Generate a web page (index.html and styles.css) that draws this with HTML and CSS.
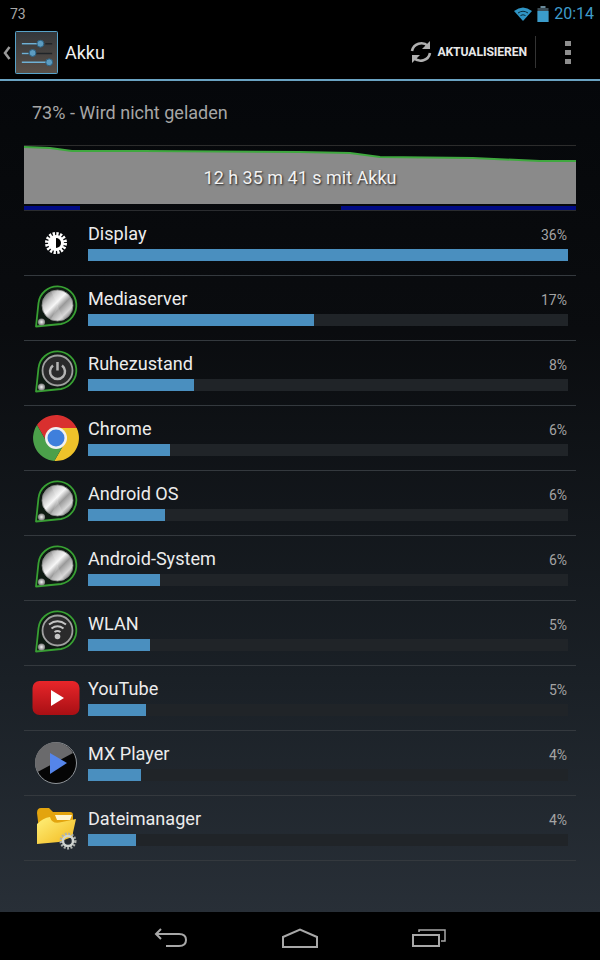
FILE: index.html
```html
<!DOCTYPE html>
<html lang="de">
<head>
<meta charset="utf-8">
<title>Akku</title>
<link rel="stylesheet" href="styles.css">
</head>
<body>
<svg class="defs" width="0" height="0" aria-hidden="true">
  <defs>
    <linearGradient id="metal" x1="0.1" y1="0.1" x2="0.9" y2="0.9">
      <stop offset="0" stop-color="#6f6f6f"/><stop offset=".22" stop-color="#c8c8c8"/><stop offset=".42" stop-color="#f6f6f6"/><stop offset=".6" stop-color="#9a9a9a"/><stop offset=".82" stop-color="#d8d8d8"/><stop offset="1" stop-color="#6a6a6a"/>
    </linearGradient>
    <linearGradient id="ytred" x1="0" y1="0" x2="0" y2="1">
      <stop offset="0" stop-color="#e8262a"/><stop offset="1" stop-color="#a80f14"/>
    </linearGradient>
    <linearGradient id="folder" x1="0" y1="0" x2="1" y2="1">
      <stop offset="0" stop-color="#fff07a"/><stop offset="1" stop-color="#f2b81c"/>
    </linearGradient>
    <linearGradient id="setbg" x1="0" y1="0" x2="0" y2="1">
      <stop offset="0" stop-color="#33373b"/><stop offset="1" stop-color="#5a5048"/>
    </linearGradient>
    <radialGradient id="ball"><stop offset="0" stop-color="#f4f4f4"/><stop offset="1" stop-color="#777"/></radialGradient>
    <symbol id="drop" viewBox="0 0 48 48">
      <path d="M4 42.500 L6.500 19 A19 19 0 1 1 29 40 Z" fill="#0e1a12" stroke="#38a033" stroke-width="1.800" stroke-linejoin="round"/>
      <circle cx="9.500" cy="38" r="3.600" fill="url(#ball)"/>
    </symbol>
    <symbol id="metaldisc" viewBox="0 0 48 48">
      <circle cx="25.500" cy="21.500" r="15.500" fill="url(#metal)" stroke="#8a8a8a" stroke-width=".8"/>
      <path d="M25.500 21.500 L19 7 L32 7 Z M25.500 21.500 L19 36 L32 36 Z" fill="#fff" opacity=".16"/>
    </symbol>
    <symbol id="darkdisc" viewBox="0 0 48 48">
      <circle cx="25.500" cy="21.500" r="15" fill="#2a2a2b" stroke="#a0a0a0" stroke-width="1.800"/>
    </symbol>
  </defs>
</svg>

<header class="status">
  <span class="status-left">73</span>
  <span class="status-right">
    <svg class="wifi" width="18" height="14" viewBox="0 0 18 14"><path d="M0 4 Q9 -3 18 4 L9 14 Z" fill="#2f94c4"/><path d="M4 6 Q9 2.500 14 6 M6.500 8.500 Q9 7 11.500 8.500" stroke="#0a2a3a" stroke-width="1" fill="none"/></svg>
    <svg class="batt" width="12" height="16" viewBox="0 0 12 16"><rect x="3.500" y="0" width="5" height="2" fill="#6a8a9a"/><rect x="0.500" y="2" width="11" height="14" fill="#3a4c56"/><rect x="0.500" y="5" width="11" height="11" fill="#3b9ccb"/></svg>
    <span class="clock">20:14</span>
  </span>
</header>

<nav class="actionbar">
  <svg class="chev" width="8" height="14" viewBox="0 0 8 14"><path d="M6.500 1 L2 7 L6.500 13" fill="none" stroke="#9a9a9a" stroke-width="2.500"/></svg>
  <svg class="appicon" width="43" height="43" viewBox="0 0 44 44">
    <rect x=".5" y=".5" width="43" height="43" rx="1" fill="url(#setbg)" stroke="#5aa7cf"/>
    <path d="M7 13H25M31 13H38M7 23H14M20 23H38" stroke="#202428" stroke-width="1.500"/>
    <path d="M7 13H25M7 23H14M7 32H34" stroke="#6fb0d4" stroke-width="1.500"/>
    <circle cx="26" cy="13" r="3.500" fill="#5d9cc0" stroke="#2b5f80"/>
    <circle cx="18" cy="22.500" r="3.500" fill="#5d9cc0" stroke="#2b5f80"/>
    <circle cx="35" cy="32" r="3.500" fill="#5d9cc0" stroke="#2b5f80"/>
  </svg>
  <span class="title">Akku</span>
  <span class="spacer"></span>
  <svg class="refresh" width="24" height="24" viewBox="0 0 24 24"><path d="M3 11 A9.500 9.500 0 0 1 19 6" fill="none" stroke="#b0b0b0" stroke-width="2.600"/><path d="M21 1 V9 H13 Z" fill="#b0b0b0"/><path d="M21 13 A9.500 9.500 0 0 1 5 18" fill="none" stroke="#b0b0b0" stroke-width="2.600"/><path d="M3 23 V15 H11 Z" fill="#b0b0b0"/></svg>
  <span class="action">AKTUALISIEREN</span>
  <span class="vsep"></span>
  <span class="overflow"><i></i><i></i><i></i></span>
</nav>

<main class="content">
  <p class="charge">73% - Wird nicht geladen</p>
  <section class="graph">
    <svg width="552" height="65" viewBox="0 0 552 65">
      <rect width="552" height="1" fill="#2c2c2c"/>
      <path d="M0 2 L26 3 L48 6 L120 6 L276 7 L326 8 L356 12 L449 13 L516 16 L552 16 V59 H0 Z" fill="#8a8a8a"/>
      <path d="M0 2 L26 3 L48 6 L120 6 L276 7 L326 8 L356 12 L449 13 L516 16 L552 16" fill="none" stroke="#3fa83f" stroke-width="2"/>
      <rect y="61" width="56" height="4" fill="#000a84"/>
      <rect x="317" y="61" width="235" height="4" fill="#000a84"/>
    </svg>
    <span class="graph-label">12 h 35 m 41 s mit Akku</span>
  </section>

  <ul class="list">
    <li class="row">
      <span class="icon"><svg width="48" height="48" viewBox="0 0 48 48"><circle cx="24" cy="24" r="9" fill="none" stroke="#fff" stroke-width="4" stroke-dasharray="2.200 1.340"/><circle cx="24" cy="24" r="8" fill="#fff"/><path d="M24 19 A5 5 0 0 1 24 29 Z" fill="#000"/></svg></span>
      <div class="info"><div class="line"><span class="name">Display</span><span class="pct">36%</span></div><div class="track"><div class="fill" style="width:480px"></div></div></div>
    </li>
    <li class="row">
      <span class="icon"><svg width="48" height="48"><use href="#drop"/><use href="#metaldisc"/></svg></span>
      <div class="info"><div class="line"><span class="name">Mediaserver</span><span class="pct">17%</span></div><div class="track"><div class="fill" style="width:226px"></div></div></div>
    </li>
    <li class="row">
      <span class="icon"><svg width="48" height="48" viewBox="0 0 48 48"><use href="#drop"/><use href="#darkdisc"/><path d="M21 16.500 A7.500 7.500 0 1 0 30 16.500" fill="none" stroke="#b4b4b4" stroke-width="2.500"/><path d="M25.500 13 V21.500" stroke="#b4b4b4" stroke-width="2.500"/></svg></span>
      <div class="info"><div class="line"><span class="name">Ruhezustand</span><span class="pct">8%</span></div><div class="track"><div class="fill" style="width:106px"></div></div></div>
    </li>
    <li class="row">
      <span class="icon"><svg width="48" height="48" viewBox="0 0 48 48">
        <path d="M5 11.070 A23 23 0 0 1 44.700 14 L24 14 L15.340 29 Z" fill="#d9302f"/>
        <path d="M44.700 14 A23 23 0 0 1 22.300 46.900 L32.660 29 L24 14 Z" fill="#eec22a"/>
        <path d="M22.300 46.900 A23 23 0 0 1 5 11.070 L15.340 29 L32.660 29 Z" fill="#4ba04a"/>
        <circle cx="24" cy="24" r="11" fill="#f0f0f0"/><circle cx="24" cy="24" r="8.500" fill="#3f7fdc"/>
      </svg></span>
      <div class="info"><div class="line"><span class="name">Chrome</span><span class="pct">6%</span></div><div class="track"><div class="fill" style="width:82px"></div></div></div>
    </li>
    <li class="row">
      <span class="icon"><svg width="48" height="48"><use href="#drop"/><use href="#metaldisc"/></svg></span>
      <div class="info"><div class="line"><span class="name">Android OS</span><span class="pct">6%</span></div><div class="track"><div class="fill" style="width:77px"></div></div></div>
    </li>
    <li class="row">
      <span class="icon"><svg width="48" height="48"><use href="#drop"/><use href="#metaldisc"/></svg></span>
      <div class="info"><div class="line"><span class="name">Android-System</span><span class="pct">6%</span></div><div class="track"><div class="fill" style="width:72px"></div></div></div>
    </li>
    <li class="row">
      <span class="icon"><svg width="48" height="48" viewBox="0 0 48 48"><use href="#drop"/><use href="#darkdisc"/><path d="M17 15.500 Q25.500 9 34 15.500 M19.500 19.500 Q25.500 15 31.500 19.500 M22.500 23 Q25.500 21 28.500 23" fill="none" stroke="#c4c4c4" stroke-width="2"/><circle cx="25.500" cy="27.500" r="2.800" fill="#c4c4c4"/></svg></span>
      <div class="info"><div class="line"><span class="name">WLAN</span><span class="pct">5%</span></div><div class="track"><div class="fill" style="width:62px"></div></div></div>
    </li>
    <li class="row">
      <span class="icon"><svg width="48" height="48" viewBox="0 0 48 48"><rect x="0.500" y="7" width="47" height="34" rx="7" fill="url(#ytred)"/><path d="M19 16 L32 24 L19 32 Z" fill="#fff"/></svg></span>
      <div class="info"><div class="line"><span class="name">YouTube</span><span class="pct">5%</span></div><div class="track"><div class="fill" style="width:58px"></div></div></div>
    </li>
    <li class="row">
      <span class="icon"><svg width="48" height="48" viewBox="0 0 48 48"><circle cx="24" cy="24" r="20.500" fill="#050505" stroke="#8f9499" stroke-width="1"/><path d="M5.500 33 A20 20 0 0 1 41 14 Z" fill="#6a6a6c"/><path d="M18 14 L35 24 L18 35 Z" fill="#5585ea"/></svg></span>
      <div class="info"><div class="line"><span class="name">MX Player</span><span class="pct">4%</span></div><div class="track"><div class="fill" style="width:53px"></div></div></div>
    </li>
    <li class="row">
      <span class="icon"><svg width="48" height="48" viewBox="0 0 48 48">
        <path d="M5 9 Q5 4 9 4 H17 L21 8 H38 Q41 8 41 11 V34 H8 Z" fill="#e3a40e"/>
        <path d="M23 11 H40 L38 16 H25 Z" fill="#fff6d0"/>
        <path d="M5 40 L5 20 Q11 14 18 13 Q20 21 30 18 L44 15 L40 33 L27 38 Z" fill="url(#folder)"/>
        <circle cx="36" cy="37" r="7" fill="none" stroke="#aeb2ae" stroke-width="3" stroke-dasharray="1.900 1.400"/>
        <circle cx="36" cy="37" r="5" fill="none" stroke="#d0d4d0" stroke-width="2.500"/>
        <circle cx="36" cy="37" r="2" fill="#25292c"/>
      </svg></span>
      <div class="info"><div class="line"><span class="name">Dateimanager</span><span class="pct">4%</span></div><div class="track"><div class="fill" style="width:48px"></div></div></div>
    </li>
  </ul>
</main>

<footer class="navbar">
  <svg width="34" height="20" viewBox="0 0 34 20"><path d="M7 1 L2 6 L7 11 M2 6 H25 Q32 6 32 12 Q32 18 25 18 H12" fill="none" stroke="#a8a8a8" stroke-width="2"/></svg>
  <svg width="36" height="20" viewBox="0 0 36 20"><path d="M1 19 V9 L18 1.500 L35 9 V19 Z" fill="none" stroke="#a8a8a8" stroke-width="2"/></svg>
  <svg width="34" height="20" viewBox="0 0 34 20"><rect x="1" y="7" width="26" height="11" fill="none" stroke="#a8a8a8" stroke-width="2"/><path d="M7 4 V2 H33 V13 H29" fill="none" stroke="#a8a8a8" stroke-width="1.500"/></svg>
</footer>
</body>
</html>
```
FILE: styles.css
```css
* { box-sizing: border-box; }
html, body { margin: 0; padding: 0; }
body {
  width: 600px;
  height: 960px;
  display: flex;
  flex-direction: column;
  overflow: hidden;
  background: #000;
  color: #e6e6e6;
  font-family: Roboto, sans-serif;
}
.defs { position: absolute; }

.status {
  height: 27px;
  flex: none;
  display: flex;
  align-items: center;
  justify-content: space-between;
  padding: 0 6px 0 10px;
}
.status-left { font-size: 14px; color: #a8a8a8; }
.status-right { display: flex; align-items: center; gap: 5px; }
.clock { font-size: 16px; color: #3f9ccb; }

.actionbar {
  height: 54px;
  flex: none;
  display: flex;
  align-items: center;
  padding: 0 0 2px 3px;
  border-bottom: 2px solid #6aa3c2;
  background: #000;
}
.chev { margin-right: 4px; margin-top: 2px; }
.title { font-size: 18px; color: #f0f0f0; margin-left: 7px; }
.spacer { flex: 1; }
.refresh { margin-right: 4px; }
.action { font-size: 12.2px; font-weight: 700; color: #e8e8e8; letter-spacing: -0.1px; }
.vsep { width: 1px; height: 32px; background: #333; margin-left: 8px; }
.overflow {
  width: 64px;
  display: flex;
  flex-direction: column;
  align-items: center;
  gap: 4px;
}
.overflow i { width: 6px; height: 5px; background: #8e8e8e; display: block; }

.content {
  flex: 1;
  min-height: 0;
  padding: 0 24px;
  background: linear-gradient(#05070a 0%, #0a0c0f 30%, #1a2026 72%, #282f37 100%);
}
.charge {
  margin: 0;
  height: 64px;
  padding: 21px 0 0 8px;
  font-size: 18px;
  line-height: 22px;
  color: #a6a6a6;
}
.graph {
  position: relative;
  height: 65px;
}
.graph svg { display: block; }
.graph-label {
  position: absolute;
  left: 0;
  right: 0;
  top: 22px;
  text-align: center;
  font-size: 18px;
  line-height: 22px;
  color: #f2f2f2;
  text-shadow: 1px 1px 2px #222;
}

.list {
  list-style: none;
  margin: 0;
  padding: 0;
  border-top: 1px solid #2a2c2f;
}
.row {
  height: 65px;
  display: flex;
  align-items: flex-start;
  border-bottom: 1px solid #34393e;
}
.icon {
  width: 64px;
  height: 64px;
  flex: none;
  display: flex;
  align-items: center;
  justify-content: center;
}
.icon svg { display: block; }
.info {
  width: 480px;
  display: flex;
  flex-direction: column;
  padding-top: 8px;
}
.line {
  display: flex;
  justify-content: space-between;
  align-items: center;
  height: 30px;
}
.name { font-size: 18.1px; color: #ececec; margin-top: -2px; }
.pct { font-size: 14px; color: #a4a4a4; margin-right: 1px; margin-top: 2px; }
.track {
  height: 12px;
  background: #202428;
}
.fill {
  height: 12px;
  background: #4a8fbf;
}

.navbar {
  height: 48px;
  flex: none;
  background: #000;
  display: flex;
  align-items: center;
  justify-content: center;
  gap: 94px;
  padding-top: 3px;
}
```
